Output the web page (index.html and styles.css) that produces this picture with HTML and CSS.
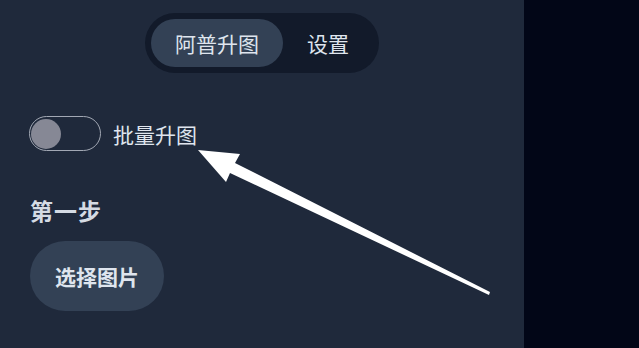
FILE: index.html
```html
<!DOCTYPE html>
<html lang="zh">
<head>
<meta charset="utf-8">
<link rel="stylesheet" href="styles.css">
</head>
<body>
<div class="app">
  <aside class="sidebar">
    <div class="tabs-wrap">
      <div class="tabs">
        <div class="tab active">阿普升图</div>
        <div class="tab">设置</div>
      </div>
    </div>
    <div class="toggle-row">
      <div class="toggle"><div class="knob"></div></div>
      <span class="toggle-label">批量升图</span>
    </div>
    <div class="step-title">第一步</div>
    <button class="pick">选择图片</button>
  </aside>
  <main class="main"></main>
  <svg class="arrow" width="639" height="348" viewBox="0 0 639 348">
    <polygon points="198,150 240,154 235,163 490,292 489,295 230,173 226,182" fill="#ffffff"/>
  </svg>
</div>
</body>
</html>
```

FILE: styles.css
```css
html, body {
  margin: 0;
  padding: 0;
  width: 639px;
  height: 348px;
  overflow: hidden;
  font-family: "Noto Sans CJK SC", "Noto Sans", sans-serif;
}
.app {
  position: relative;
  display: flex;
  width: 639px;
  height: 348px;
}
.sidebar {
  width: 524px;
  flex: none;
  background: #1f293b;
  padding: 13px 0 0 30px;
  box-sizing: border-box;
  display: flex;
  flex-direction: column;
  align-items: flex-start;
}
.main {
  flex: 1;
  background: #020617;
}
.tabs-wrap {
  margin-left: -30px;
  width: 524px;
  display: flex;
  justify-content: center;
}
.tabs {
  display: flex;
  padding: 6px;
  background: #121a2a;
  border-radius: 30px;
}
.tab {
  height: 48px;
  line-height: 48px;
  padding: 0 24px;
  border-radius: 24px;
  font-size: 21px;
  color: #dfe5ee;
}
.tab.active {
  background: #334155;
}
.toggle-row {
  display: flex;
  align-items: center;
  margin-top: 43px;
}
.toggle {
  width: 72px;
  height: 35px;
  box-sizing: border-box;
  border: 1px solid #a2a8b4;
  border-radius: 18px;
  display: flex;
  align-items: center;
  padding-left: 1px;
  margin-left: -1px;
}
.knob {
  width: 30px;
  height: 30px;
  border-radius: 50%;
  background: #868895;
}
.toggle-label {
  margin-left: 12px;
  font-size: 21px;
  color: #dfe5ee;
}
.step-title {
  margin-top: 44px;
  font-size: 23px;
  line-height: 30px;
  font-weight: bold;
  color: #d5dbe4;
  letter-spacing: 1px;
}
.pick {
  margin-top: 16px;
  height: 70px;
  padding: 0 25px;
  border: none;
  border-radius: 35px;
  background: #334155;
  color: #dfe5ee;
  font-family: inherit;
  font-size: 21px;
  font-weight: bold;
}
.arrow {
  position: absolute;
  left: 0;
  top: 0;
  pointer-events: none;
}
```
